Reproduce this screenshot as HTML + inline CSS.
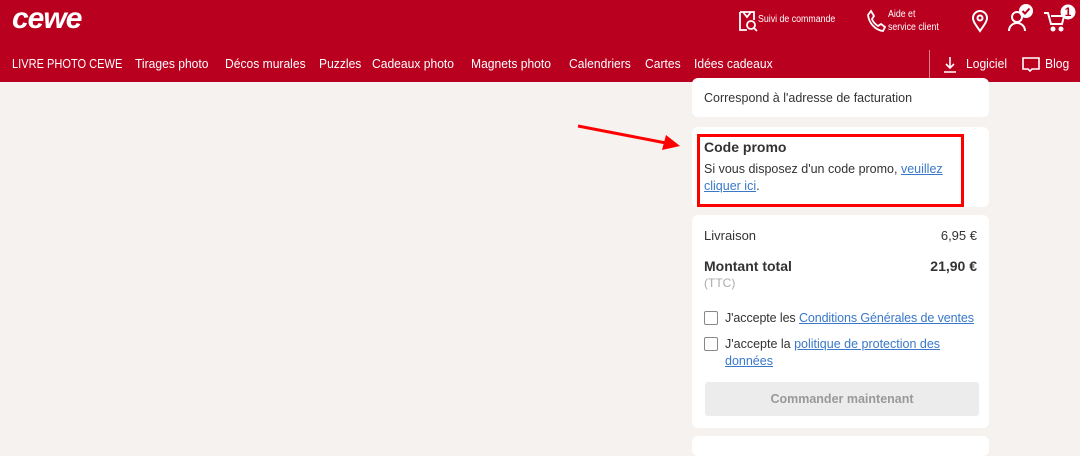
<!DOCTYPE html>
<html><head><meta charset="utf-8"><style>
*{margin:0;padding:0;box-sizing:border-box}
body{width:1080px;height:441px;overflow:hidden;background:#f5f2ef;font-family:"Liberation Sans",sans-serif;color:#333;position:relative}
.hdr{position:absolute;left:0;top:0;width:1080px;height:82px;background:#b9001f;color:#fff}
.logo{position:absolute;left:12px;top:2px;font:bold 30px "Liberation Sans",sans-serif;font-style:italic;letter-spacing:-1px}
.nav span{position:absolute;top:56px;font-size:13px;white-space:nowrap;transform:scaleX(0.93);transform-origin:0 0}
.nav span.c{transform:scaleX(0.85)}
.tx{position:absolute;font-size:10px;line-height:13px;transform:scaleX(0.88);transform-origin:0 0;white-space:nowrap}
.card{position:absolute;left:692px;width:297px;background:#fff;border-radius:6px}
a{color:#3a78c9;text-decoration:underline}
.cb{position:absolute;left:704px;width:14px;height:14px;border:1.5px solid #888;border-radius:2px;background:#fff}
</style></head><body>
<div class="hdr">
<div class="logo">cewe</div>
<div class="nav"><span class="c" style="left:12px">LIVRE PHOTO CEWE</span><span style="left:135px">Tirages photo</span><span style="left:225px">Décos murales</span><span style="left:319px">Puzzles</span><span style="left:372px">Cadeaux photo</span><span style="left:471px">Magnets photo</span><span style="left:569px">Calendriers</span><span style="left:645px">Cartes</span><span style="left:694px">Idées cadeaux</span><span style="left:966px">Logiciel</span><span style="left:1045px">Blog</span></div>
<div style="position:absolute;left:929px;top:50px;width:1px;height:30px;background:#e07c8c"></div>
<svg style="position:absolute;left:737px;top:10px" width="22" height="22" viewBox="0 0 22 22" fill="none" stroke="#fff" stroke-width="1.8"><path d="M3 2h14v8M3 2v18h7M6 2l4 5 4-5"/><circle cx="14" cy="15" r="4"/><path d="M17 18l3 3"/></svg>
<div class="tx" style="left:758px;top:13px">Suivi de commande</div>
<svg style="position:absolute;left:866px;top:9px" width="20" height="24" viewBox="0 0 20 24" fill="none" stroke="#fff" stroke-width="1.8"><path d="M5 2l3 5-2 3c1 3 3 5 6 7l3-2 4 3-2 4C9 21 3 14 2 6z"/></svg>
<div class="tx" style="left:888px;top:8px">Aide et<br>service client</div>
<svg style="position:absolute;left:970px;top:9px" width="20" height="24" viewBox="0 0 20 24" fill="none" stroke="#fff" stroke-width="2"><path d="M10 22C5 15 3 12 3 9a7 7 0 0 1 14 0c0 3-2 6-7 13z"/><circle cx="10" cy="9" r="2.5"/></svg>
<svg style="position:absolute;left:1006px;top:2px" width="30" height="30" viewBox="0 0 30 30" fill="none" stroke="#fff" stroke-width="2"><circle cx="11" cy="15" r="5"/><path d="M3 29c0-5 4-8 8-8s8 3 8 8"/><circle cx="20" cy="9" r="7" fill="#fff" stroke="none"/><path d="M16.5 9l2.5 2.5 4.5-5" stroke="#b9001f"/></svg>
<svg style="position:absolute;left:1043px;top:2px" width="34" height="30" viewBox="0 0 34 30" fill="none" stroke="#fff" stroke-width="2"><path d="M1 11h4l3 11h11l2-8H8"/><circle cx="10" cy="27" r="1.5" fill="#fff"/><circle cx="18" cy="27" r="1.5" fill="#fff"/><circle cx="25" cy="10" r="7.5" fill="#fff" stroke="none"/><text x="25" y="14" fill="#b9001f" stroke="none" font-size="12" font-weight="bold" text-anchor="middle" font-family="Liberation Sans">1</text></svg>
<svg style="position:absolute;left:942px;top:56px" width="16" height="18" viewBox="0 0 16 18" fill="none" stroke="#fff" stroke-width="1.6"><path d="M8 1v11M4 8l4 4 4-4M2 16h12"/></svg>
<svg style="position:absolute;left:1022px;top:57px" width="18" height="16" viewBox="0 0 18 16" fill="none" stroke="#fff" stroke-width="1.6"><path d="M1 1h16v11H10l-2 2-2-2H1z"/></svg>
</div>
<div class="card" style="top:78px;height:39px"><div style="position:absolute;left:12px;top:13px;font-size:12.5px">Correspond à l'adresse de facturation</div></div>
<div class="card" style="top:127px;height:80px"></div>
<div style="position:absolute;left:697px;top:134px;width:267px;height:73px;border:3px solid #f00"></div>
<div style="position:absolute;left:704px;top:139px;font-size:14px;font-weight:bold;color:#333">Code promo</div>
<div style="position:absolute;left:704px;top:161px;width:250px;font-size:12.5px;line-height:17px">Si vous disposez d'un code promo, <a>veuillez cliquer ici</a>.</div>
<svg style="position:absolute;left:570px;top:118px" width="120" height="35"><line x1="8" y1="8" x2="96" y2="25" stroke="#f00" stroke-width="3"/><path d="M110 28L92 32 96 17z" fill="#f00"/></svg>
<div class="card" style="top:215px;height:213px"></div>
<div style="position:absolute;left:704px;top:228px;font-size:13px">Livraison</div>
<div style="position:absolute;right:103px;top:228px;font-size:13px">6,95 €</div>
<div style="position:absolute;left:704px;top:258px;font-size:14px;font-weight:bold">Montant total</div>
<div style="position:absolute;right:103px;top:258px;font-size:14px;font-weight:bold">21,90 €</div>
<div style="position:absolute;left:704px;top:276px;font-size:12px;color:#aaa">(TTC)</div>
<div class="cb" style="top:311px"></div>
<div style="position:absolute;left:725px;top:311px;font-size:12.5px;letter-spacing:-0.1px">J'accepte les <a>Conditions Générales de ventes</a></div>
<div class="cb" style="top:337px"></div>
<div style="position:absolute;left:725px;top:336px;width:240px;font-size:12.5px;line-height:17px">J'accepte la <a>politique de protection des données</a></div>
<div style="position:absolute;left:705px;top:382px;width:274px;height:34px;background:#ececec;border-radius:3px;text-align:center;line-height:34px;font-size:12.5px;font-weight:bold;color:#999">Commander maintenant</div>
<div class="card" style="top:436px;height:20px"></div>
</body></html>
